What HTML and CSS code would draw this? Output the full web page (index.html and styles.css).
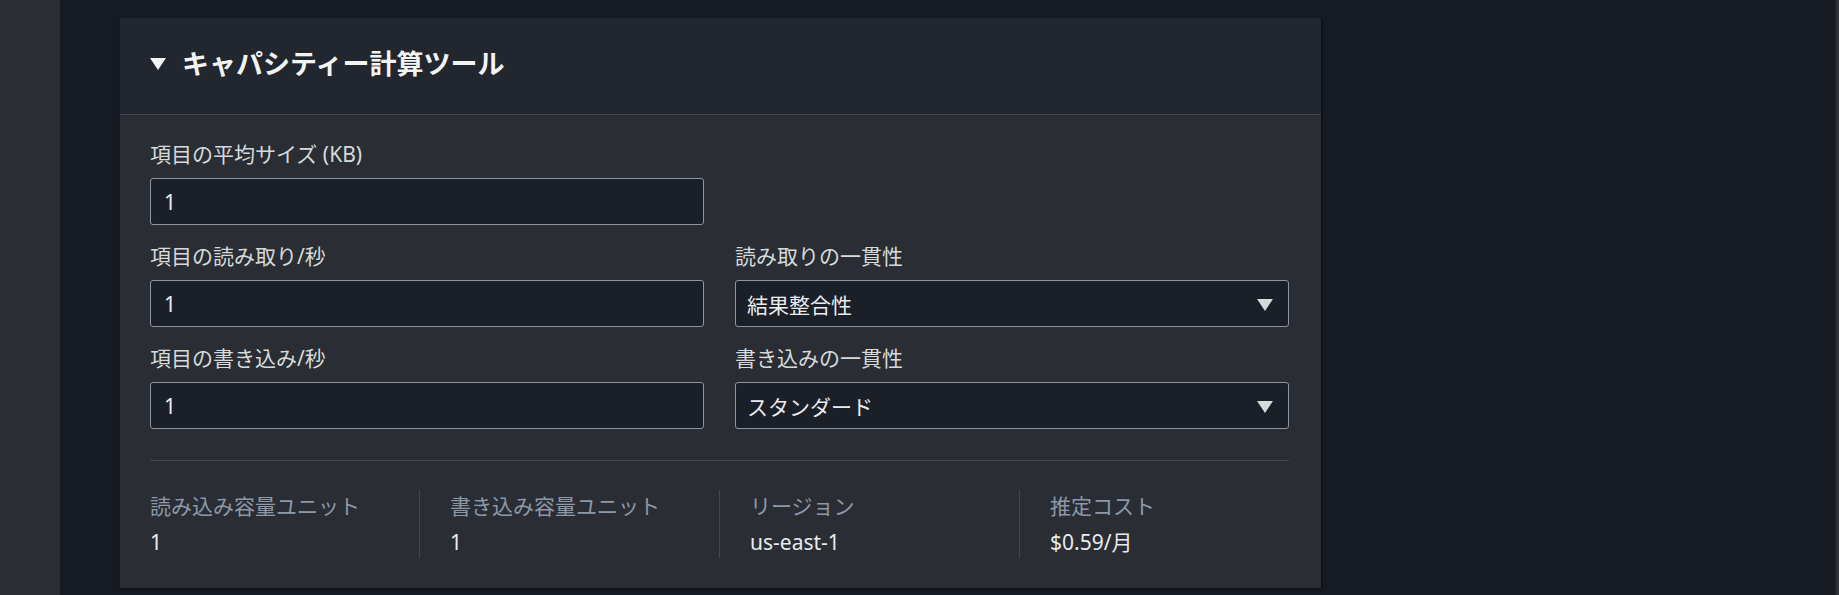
FILE: index.html
```html
<!DOCTYPE html>
<html lang="ja">
<head>
<meta charset="utf-8">
<title>キャパシティー計算ツール</title>
<link rel="stylesheet" href="styles.css">
</head>
<body>
<div class="app">
  <aside class="sidebar"></aside>
  <main class="main">
    <section class="card">
      <header class="card-header">
        <svg class="caret" width="16" height="12" viewBox="0 0 16 12"><path d="M0 0 H16 L8 12 Z" fill="#f2f3f3"/></svg>
        <h2 class="title">キャパシティー計算ツール</h2>
      </header>
      <div class="card-body">
        <div class="form-grid">
          <div class="field">
            <label class="label">項目の平均サイズ (KB)</label>
            <input class="input" type="text" value="1">
          </div>
          <div class="field empty"></div>
          <div class="field">
            <label class="label">項目の読み取り/秒</label>
            <input class="input" type="text" value="1">
          </div>
          <div class="field">
            <label class="label">読み取りの一貫性</label>
            <div class="select"><span>結果整合性</span><svg class="sel-caret" width="16" height="12" viewBox="0 0 16 12"><path d="M0 0 H16 L8 12 Z" fill="#d5dbdb"/></svg></div>
          </div>
          <div class="field">
            <label class="label">項目の書き込み/秒</label>
            <input class="input" type="text" value="1">
          </div>
          <div class="field">
            <label class="label">書き込みの一貫性</label>
            <div class="select"><span>スタンダード</span><svg class="sel-caret" width="16" height="12" viewBox="0 0 16 12"><path d="M0 0 H16 L8 12 Z" fill="#d5dbdb"/></svg></div>
          </div>
        </div>
        <hr class="divider">
        <div class="stats">
          <div class="stat">
            <div class="stat-label">読み込み容量ユニット</div>
            <div class="stat-value">1</div>
          </div>
          <div class="stat">
            <div class="stat-label">書き込み容量ユニット</div>
            <div class="stat-value">1</div>
          </div>
          <div class="stat">
            <div class="stat-label">リージョン</div>
            <div class="stat-value">us-east-1</div>
          </div>
          <div class="stat">
            <div class="stat-label">推定コスト</div>
            <div class="stat-value">$0.59/月</div>
          </div>
        </div>
      </div>
    </section>
  </main>
  <div class="scroll-edge"></div>
</div>
</body>
</html>
```
FILE: styles.css
```css
* { box-sizing: border-box; }
html, body {
  margin: 0;
  height: 100%;
  background: #161a22;
  font-family: "Noto Sans", "Noto Sans CJK JP", sans-serif;
  color: #d5dbdb;
  overflow: hidden;
}
.app {
  display: flex;
  height: 100%;
}
.sidebar {
  width: 60px;
  flex: none;
  background: #2a2d32;
}
.main {
  flex: 1;
  padding: 18px 0 0 60px;
}
.scroll-edge {
  width: 4px;
  flex: none;
  background: #2f3237;
  border-left: 1px solid #202329;
}
.card {
  width: 1201px;
  background: #2a2d33;
  box-shadow: 1px 1px 2px rgba(0,0,0,0.6);
}
.card-header {
  height: 97px;
  display: flex;
  align-items: center;
  padding: 0 30px 5px;
  background: #22262e;
  border-bottom: 1px solid #414750;
}
.caret {
  margin-right: 16px;
  margin-top: 1px;
}
.title {
  margin: 0;
  font-size: 27px;
  font-weight: 700;
  color: #f2f3f3;
  line-height: 36px;
}
.card-body {
  padding: 25px 32px 30px 30px;
}
.form-grid {
  display: grid;
  grid-template-columns: 1fr 1fr;
  column-gap: 31px;
  row-gap: 17px;
}
.field {
  display: flex;
  flex-direction: column;
}
.label {
  font-size: 21px;
  line-height: 28px;
  color: #d5dbdb;
  margin-bottom: 10px;
}
.input, .select {
  height: 47px;
  background: #1a1f28;
  border: 1px solid #8d959e;
  border-radius: 3px;
  color: #e9ebed;
  font-family: inherit;
  font-size: 21px;
  padding: 0 13px;
  outline: none;
}
.select {
  display: flex;
  align-items: center;
  justify-content: space-between;
  padding: 0 15px 0 11px;
}
.sel-caret {
  margin-top: 2px;
}
.divider {
  border: none;
  border-top: 1px solid #414750;
  margin: 31px 0 29px;
  height: 0;
}
.stats {
  display: flex;
}
.stat {
  flex: 1 1 0;
  min-width: 0;
  padding: 2px 30px;
  border-right: 1px solid #414750;
}
.stat:first-child { padding-left: 0; }
.stat:last-child { padding-right: 0; border-right: none; }
.stat-label {
  font-size: 21px;
  line-height: 28px;
  color: #8d99a8;
}
.stat-value {
  font-size: 21px;
  line-height: 28px;
  margin-top: 8px;
  color: #e9ebed;
}
```
